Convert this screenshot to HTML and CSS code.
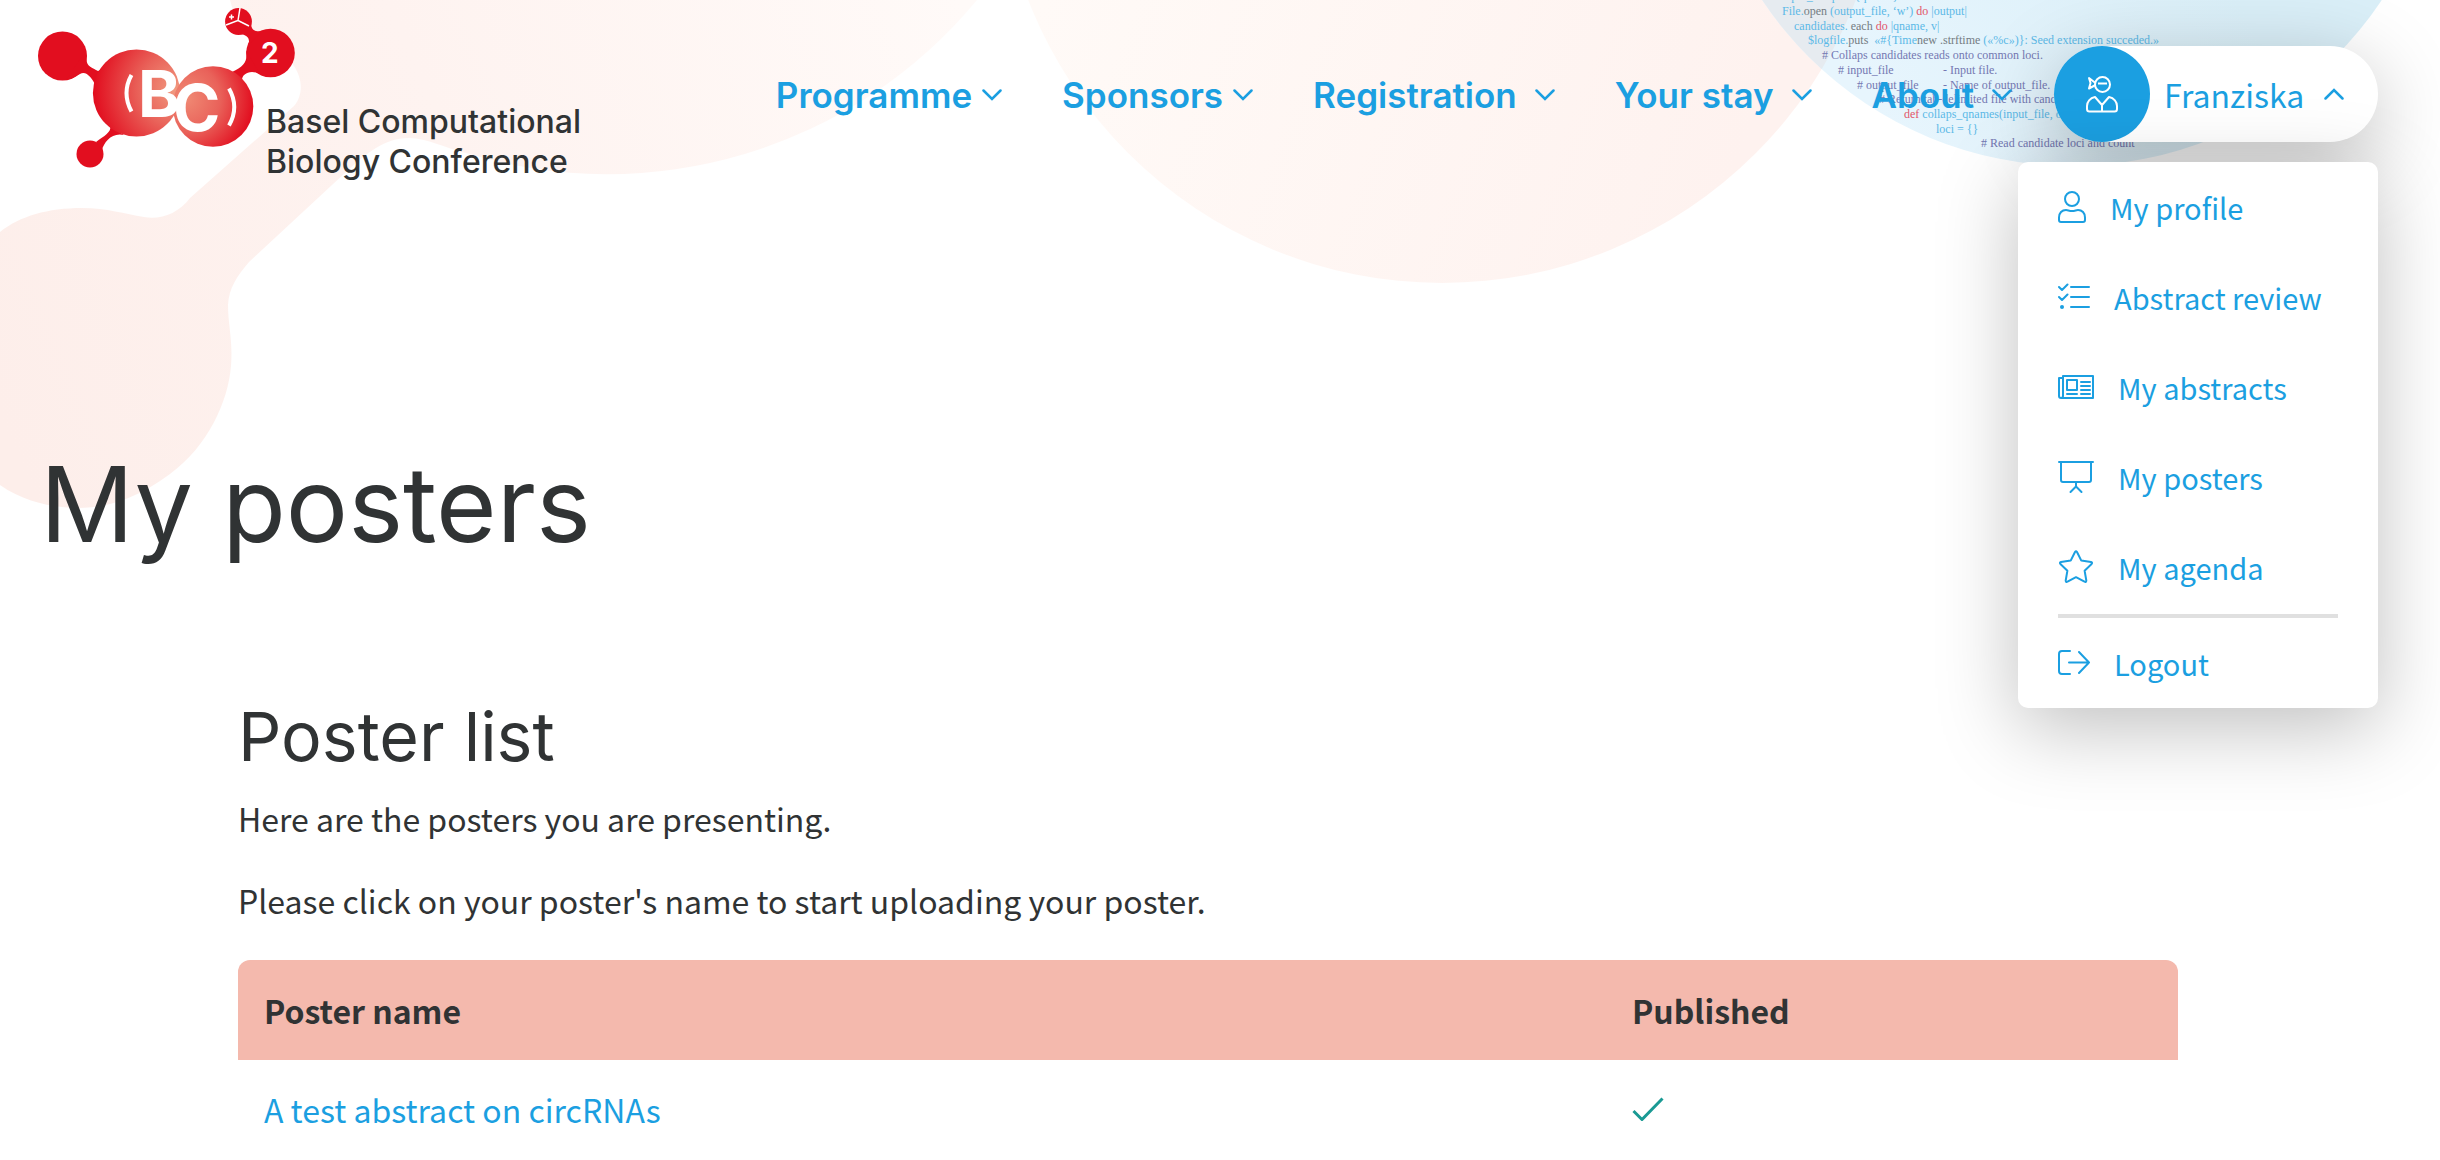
FILE: index.html
```html
<!DOCTYPE html>
<html lang="en">
  <head>
    <meta charset="UTF-8" />
    <meta name="viewport" content="width=device-width, initial-scale=1.0" />
    <title>My posters - Basel Computational Biology Conference</title>
    <link rel="stylesheet" href="styles.css">
  </head>
  <body>
    <!-- background molecules -->
    <svg class="backdrop" width="2440" height="520" viewBox="0 0 2440 520" aria-hidden="true">
      <defs>
        <linearGradient id="pinkLeft" gradientUnits="userSpaceOnUse" x1="0" y1="420" x2="960" y2="0">
          <stop offset="0" stop-color="#fdeeea" />
          <stop offset="0.5" stop-color="#fef3f0" />
          <stop offset="1" stop-color="#fffaf8" />
        </linearGradient>
        <linearGradient id="pinkMid" gradientUnits="userSpaceOnUse" x1="1040" y1="0" x2="1700" y2="260">
          <stop offset="0" stop-color="#fffaf7" />
          <stop offset="1" stop-color="#fef2ef" />
        </linearGradient>
        <linearGradient id="blue" gradientUnits="userSpaceOnUse" x1="1900" y1="160" x2="2240" y2="0">
          <stop offset="0" stop-color="#e7f5fd" />
          <stop offset="1" stop-color="#daeff8" />
        </linearGradient>
        <clipPath id="blueClip"><circle cx="2072" cy="-206" r="372" /></clipPath>
      </defs>
      <path fill="url(#pinkLeft)" d="M230 0C234 16 240 28 250 38C264 50 284 52 294 66C302 78 304 94 294 106L190 198C178 214 160 220 144 217C124 214 108 208 82 208C48 208 20 216 0 232V485C20 499 42 505 62 507C106 512 140 496 170 474C208 446 228 402 231 366C233 340 228 325 228 305C229 288 237 276 249 262L346 172C366 154 384 138 409 138C428 138 444 148 466 153A480 480 0 0 0 977 0Z" />
      <circle cx="1442" cy="-161" r="444" fill="url(#pinkMid)" />
      <circle cx="2072" cy="-206" r="372" fill="url(#blue)" />
      <g clip-path="url(#blueClip)">
        <circle cx="1442" cy="-161" r="444" fill="#e6ebf0" />
      </g>
      <g class="code">
        <text x="1776" y="0">output_file.puts {qname}</text>
        <text x="1782" y="15">File.<tspan class="dark">open</tspan> (output_file, ‘w’) <tspan class="red">do</tspan> |output|</text>
        <text x="1794" y="30">candidates. <tspan class="dark">each</tspan> <tspan class="red">do</tspan> |qname, v|</text>
        <text x="1808" y="44">$logfile.<tspan class="dark">puts</tspan> &nbsp;«#{Time<tspan class="dark">new .strftime</tspan> («%c»)}: Seed extension succeded.»</text>
        <g class="note">
          <text x="1822" y="59"># Collaps candidates reads onto common loci.</text>
          <text x="1838" y="74"># input_file</text>
          <text x="1943" y="74">- Input file.</text>
          <text x="1857" y="89"># output_file</text>
          <text x="1943" y="89">- Name of output_file.</text>
          <text x="1879" y="103"># Return tab-delimited file with candidates</text>
        </g>
        <text x="1904" y="118"><tspan class="red">def</tspan> collaps_qnames(input_file, output)</text>
        <text x="1936" y="133">loci = {}</text>
        <text class="note" x="1981" y="147"># Read candidate loci and count</text>
      </g>
    </svg>

    <header class="header">
      <a class="brand" href="#">
        <svg class="brand-logo" width="262" height="182" viewBox="36 0 262 182" role="img" aria-label="BC2">
          <defs>
            <radialGradient id="ballB" gradientUnits="userSpaceOnUse" cx="176" cy="90" r="82">
              <stop offset="0" stop-color="#f19a80" />
              <stop offset="0.45" stop-color="#e9635a" />
              <stop offset="1" stop-color="#e20e1f" />
            </radialGradient>
            <radialGradient id="ballC" gradientUnits="userSpaceOnUse" cx="186" cy="98" r="68">
              <stop offset="0" stop-color="#f08a74" />
              <stop offset="0.5" stop-color="#e9625a" />
              <stop offset="1" stop-color="#e20e1f" />
            </radialGradient>
          </defs>
          <g fill="#e20e1f">
            <circle cx="62.500" cy="56" r="24.500" />
            <path d="M86 50C86 66 87 65 98 71L108 66L96 86C92 78 86 70 80 74C74 78 70 79 66 80Z" />
            <circle cx="90" cy="154" r="13.500" />
            <path d="M110 126C112 132 104 136 96 142L102 150C104 142 112 132 124 135Z" />
            <circle cx="270.500" cy="53" r="24.300" />
            <path d="M246 50C248 62 244 66 232 72L242 80C242 74 250 69 260 74Z" />
            <circle cx="238.500" cy="21.500" r="13.400" />
            <path d="M251 22C251 30 254 32 262 31L248 46C251 38 247 35 240 34Z" />
          </g>
          <circle cx="136.500" cy="93" r="43.600" fill="url(#ballB)" />
          <circle cx="213" cy="106.500" r="40.300" fill="url(#ballC)" />
          <g fill="none" stroke="#fff">
            <path stroke-width="4" d="M131.500 75Q121.500 93 131.500 111.500M229 88.500Q239.500 107 229 125.500" />
            <path stroke-width="1.500" d="M240 8L238 20.500L226 25M238 20.500L249 26" />
            <path stroke-width="1.500" d="M229 17H234M231.500 14.500V19.500" />
          </g>
          <g class="brand-letters">
            <text x="138" y="117" font-size="64">B</text>
            <text x="173" y="131" font-size="64">C</text>
            <text x="261" y="63" font-size="28">2</text>
          </g>
        </svg>
        <span class="brand-name">Basel Computational<br />Biology Conference</span>
      </a>

      <nav class="nav">
        <a class="nav-link" href="#">Programme
          <svg class="chevron" viewBox="0 0 20 12"><path d="M1.500 1.500L10 10L18.500 1.500" /></svg>
        </a>
        <a class="nav-link" href="#">Sponsors
          <svg class="chevron" viewBox="0 0 20 12"><path d="M1.500 1.500L10 10L18.500 1.500" /></svg>
        </a>
        <a class="nav-link wide" href="#">Registration
          <svg class="chevron" viewBox="0 0 20 12"><path d="M1.500 1.500L10 10L18.500 1.500" /></svg>
        </a>
        <a class="nav-link wide" href="#">Your stay
          <svg class="chevron" viewBox="0 0 20 12"><path d="M1.500 1.500L10 10L18.500 1.500" /></svg>
        </a>
        <a class="nav-link wide" href="#">About
          <svg class="chevron" viewBox="0 0 20 12"><path d="M1.500 1.500L10 10L18.500 1.500" /></svg>
        </a>
      </nav>

      <div class="user">
        <button class="user-button" type="button" aria-expanded="true">
          <span class="avatar">
            <svg width="32" height="38" viewBox="0 0 32 38">
              <circle cx="16.500" cy="9.500" r="7.500" />
              <path d="M12 8.500H21M9.500 8L3 3L4.500 8L3 13.500L9.500 10" />
              <path d="M9 22L16 30L23 22C28 23 31 27 31 31V34Q31 36.500 28.500 36.500H3.500Q1 36.500 1 34V31C1 27 4 23 9 22ZM16 30V36" />
            </svg>
          </span>
          <span class="user-name">Franziska</span>
          <svg class="chevron" viewBox="0 0 20 12"><path d="M1.500 10.500L10 2L18.500 10.500" /></svg>
        </button>

        <div class="menu">
          <a class="menu-item" href="#">
            <svg width="28" height="32" viewBox="0 0 28 32"><circle cx="14" cy="8" r="7" /><path d="M8 19C10 19 11 20 14 20S18 19 20 19C24 19 27 22 27 26.500V29Q27 31 25 31H3Q1 31 1 29V26.500C1 22 4 19 8 19Z" /></svg>
            My profile
          </a>
          <a class="menu-item" href="#">
            <svg width="32" height="32" viewBox="0 0 32 32"><path d="M1 6L4 9L9.500 3.500M1 16L4 19L9.500 13.500M13 6H31M13 16H31M13 26H31" /><circle class="dot" cx="4" cy="26" r="2" /></svg>
            Abstract review
          </a>
          <a class="menu-item" href="#">
            <svg width="36" height="32" viewBox="0 0 36 32"><path d="M5 5H35V27H3Q1 27 1 25V7H5M5 5V25Q5 27 3 27M9 9H19V19H9ZM23 11H32M23 15H32M23 19H32M23 23H32M9 23H19" /></svg>
            My abstracts
          </a>
          <a class="menu-item" href="#">
            <svg width="36" height="34" viewBox="0 0 36 34"><path d="M1 2H35M3 2V20Q3 22 5 22H31Q33 22 33 20V2M18 22V27M12.500 32L18 26.500L23.500 32" /></svg>
            My posters
          </a>
          <a class="menu-item" href="#">
            <svg width="36" height="34" viewBox="0 0 36 34"><path d="M17 2Q18 0.500 19 2L23.300 10.600L33 12Q34.800 12.500 33.600 14L26.600 20.700L28.300 30.500Q28.300 32.500 26.500 31.700L18 27.200L9.500 31.700Q7.700 32.500 7.700 30.500L9.400 20.700L2.400 14Q1.200 12.500 3 12L12.700 10.600Z" /></svg>
            My agenda
          </a>
          <hr class="menu-rule" />
          <a class="menu-item" href="#">
            <svg width="32" height="32" viewBox="0 0 32 32"><path d="M12 4H4Q1 4 1 7V24Q1 27 4 27H12M11 15.500H31M21 5L31 15.500L21 26" /></svg>
            Logout
          </a>
        </div>
      </div>
    </header>

    <main class="main">
      <h1>My posters</h1>
      <section class="posters">
        <h2>Poster list</h2>
        <p>Here are the posters you are presenting.</p>
        <p>Please click on your poster's name to start uploading your poster.</p>
        <table class="table">
          <thead>
            <tr>
              <th class="col-name" scope="col">Poster name</th>
              <th scope="col">Published</th>
            </tr>
          </thead>
          <tbody>
            <tr>
              <td><a href="#">A test abstract on circRNAs</a></td>
              <td><svg class="tick" width="32" height="24" viewBox="0 0 32 24" role="img" aria-label="Yes"><path d="M1.500 14L10 22.500L30.500 1.500" /></svg></td>
            </tr>
          </tbody>
        </table>
      </section>
    </main>
  </body>
</html>
```
FILE: styles.css
```css
* {
  box-sizing: border-box;
}

body {
  position: relative;
  margin: 0;
  overflow-x: hidden;
  background: #fff;
  color: #303334;
  font-family: "Noto Sans CJK SC", "Open Sans", sans-serif;
  font-size: 32px;
  line-height: 48px;
}

a {
  color: #1b9fe1;
  text-decoration: none;
}

/* background */
.backdrop {
  position: absolute;
  top: 0;
  left: 0;
  z-index: -1;
}
.code {
  font-family: "Liberation Serif", serif;
  font-size: 12px;
  fill: #5cb9e7;
}
.code .dark {
  fill: #747c82;
}
.code .red {
  fill: #e2566a;
}
.code .note {
  fill: #7478b2;
}

/* header */
.header {
  display: flex;
  align-items: flex-start;
  padding: 0 62px 0 36px;
}
.brand {
  display: flex;
  align-items: flex-end;
  color: #303334;
}
.brand-letters {
  fill: #fff;
  font-family: Inter, sans-serif;
  font-weight: 700;
}
.brand-name {
  margin-left: -32px;
  font-family: Inter, sans-serif;
  font-weight: 500;
  line-height: 40px;
  white-space: nowrap;
}
.nav {
  display: flex;
  gap: 60px;
  height: 96px;
  margin: 47px 42px 0 auto;
}
.nav-link {
  display: flex;
  align-items: center;
  gap: 10px;
  font-family: Inter, sans-serif;
  font-size: 35px;
  font-weight: 600;
  white-space: nowrap;
}
.wide {
  gap: 18px;
}
.chevron {
  width: 20px;
  height: 12px;
  fill: none;
  stroke: #1b9fe1;
  stroke-width: 2.5;
  stroke-linecap: round;
}

/* user menu */
.user {
  position: relative;
  margin-top: 46px;
}
.user-button {
  display: flex;
  align-items: center;
  width: 324px;
  height: 96px;
  padding: 0;
  border: 0;
  border-radius: 48px;
  background: #fff;
  box-shadow: 0 20px 80px rgba(0, 0, 0, 0.25);
  color: #1b9fe1;
  font: inherit;
}
.avatar {
  display: grid;
  place-items: center;
  width: 96px;
  height: 96px;
  border-radius: 50%;
  background: #1b9fe1;
}
.avatar svg {
  fill: none;
  stroke: #fff;
  stroke-width: 2;
  stroke-linejoin: round;
}
.user-name {
  margin: 0 20px 0 14px;
}
.menu {
  position: absolute;
  top: 116px;
  right: 0;
  width: 360px;
  border-radius: 10px;
  background: #fff;
  box-shadow: 0 20px 80px rgba(0, 0, 0, 0.25);
}
.menu-item {
  display: flex;
  align-items: center;
  gap: 24px;
  height: 90px;
  padding: 0 40px;
  font-size: 29px;
  white-space: nowrap;
}
.menu-item svg {
  flex: none;
  fill: none;
  stroke: #1b9fe1;
  stroke-width: 2;
  stroke-linecap: round;
  stroke-linejoin: round;
}
.menu-item .dot {
  fill: #1b9fe1;
  stroke: none;
}
.menu-rule {
  height: 4px;
  margin: 2px 40px 0;
  border: 0;
  background: #e0e0e0;
}

/* content */
h1,
h2 {
  margin: 0;
  font-family: Inter, sans-serif;
  font-weight: 400;
}
h1 {
  margin: 258px 0 126px 40px;
  font-size: 104px;
  line-height: 128px;
}
h2 {
  margin-bottom: 16px;
  font-size: 68px;
  line-height: 84px;
}
.posters {
  padding: 0 262px 0 238px;
}
p {
  margin: 0 0 34px;
}
.table {
  width: 100%;
  margin-top: 36px;
  border-collapse: separate;
  border-spacing: 0;
}
th,
td {
  height: 98px;
  padding: 0 26px;
  text-align: left;
}
th {
  height: 100px;
  background: #f4b9ad;
}
th:first-child {
  border-top-left-radius: 12px;
}
th:last-child {
  border-top-right-radius: 12px;
}
.col-name {
  width: 1368px;
}
.tick {
  display: block;
  fill: none;
  stroke: #1a9a94;
  stroke-width: 3;
}
```
